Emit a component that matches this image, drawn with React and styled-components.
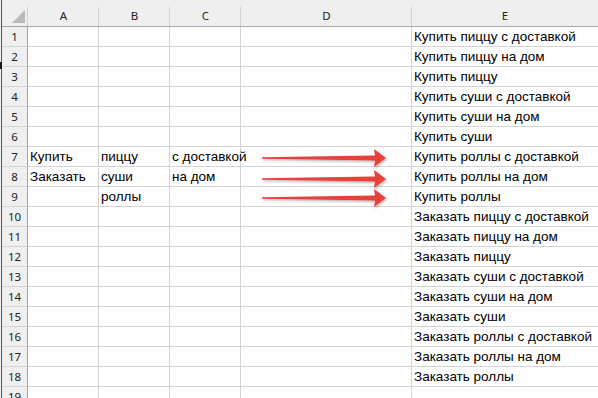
import React from 'react';
import styled, { createGlobalStyle } from 'styled-components';

const GlobalStyle = createGlobalStyle`
  html, body {
    margin: 0;
    padding: 0;
    background: #ffffff;
    overflow: hidden;
  }
`;

const Page = styled.div`
  position: relative;
  width: 598px;
  height: 398px;
  overflow: hidden;
  padding-left: 1px;
  box-sizing: border-box;
  background: #f0f0f0;
`;

const SplitHandle = styled.div`
  position: absolute;
  left: 0;
  top: 62px;
  width: 2px;
  height: 7px;
  background: #1b1b1b;
`;

const Sheet = styled.div`
  display: grid;
  grid-template-columns: 26px 71px 71px 71px 171px 1fr;
  grid-template-rows: 27px repeat(19, 20px);
  border-left: 1px solid #217346;
  background: #ffffff;
  height: 100%;
`;

const Corner = styled.div`
  position: relative;
  background:
    linear-gradient(#d2d2d2, #d2d2d2) right bottom / 1px 19px no-repeat,
    #efefef;
  border-bottom: 1px solid #a6a6a6;

  &::before {
    content: '';
    position: absolute;
    left: 10px;
    top: 10px;
    width: 0;
    height: 0;
    border-left: 13px solid transparent;
    border-bottom: 13px solid #b9b9b9;
  }
`;

const ColHeader = styled.div`
  background:
    linear-gradient(#d2d2d2, #d2d2d2) right bottom / 1px 19px no-repeat,
    #efefef;
  border-bottom: 1px solid #a6a6a6;
  font-family: 'Noto Sans', 'Open Sans', sans-serif;
  font-size: 11.5px;
  color: #222;
  display: flex;
  align-items: flex-end;
  justify-content: center;
  padding-bottom: 3px;
  box-sizing: border-box;
  ${({ $last }) => $last && 'background: #efefef;'}
`;

const RowHeader = styled.div`
  background: #efefef;
  border-right: 1px solid #a6a6a6;
  border-bottom: 1px solid #d4d4d4;
  font-family: 'Noto Sans', 'Open Sans', sans-serif;
  font-size: 11.5px;
  color: #222;
  display: flex;
  align-items: center;
  justify-content: center;
  box-sizing: border-box;
`;

const Cell = styled.div`
  border-bottom: 1px solid #d4d4d4;
  border-right: ${({ $last }) => ($last ? 'none' : '1px solid #d4d4d4')};
  font-family: 'Liberation Sans', Arial, sans-serif;
  font-size: 13.5px;
  color: #000;
  white-space: nowrap;
  padding: 0 0 2px 2px;
  display: flex;
  align-items: flex-end;
  box-sizing: border-box;
`;

const Arrows = styled.svg`
  position: absolute;
  left: 0;
  top: 0;
  pointer-events: none;
`;

const columns = ['A', 'B', 'C', 'D', 'E'];

// every verb × food × delivery combination, in sheet order
const combos = [];
['Купить', 'Заказать'].forEach((verb) =>
  ['пиццу', 'суши', 'роллы'].forEach((food) =>
    ['с доставкой', 'на дом', ''].forEach((how) =>
      combos.push([verb, food, how].filter(Boolean).join(' '))
    )
  )
);

const sources = {
  7: ['Купить', 'пиццу', 'с доставкой'],
  8: ['Заказать', 'суши', 'на дом'],
  9: ['', 'роллы', ''],
};

const rows = Array.from({ length: 19 }, (_, i) => {
  const n = i + 1;
  const [a = '', b = '', c = ''] = sources[n] || [];
  return { n, cells: [a, b, c, '', combos[i] || ''] };
});

const arrowYs = [158, 179, 198];

const arrowPoints = (cy) =>
  [
    [262, cy - 0.8],
    [375, cy - 2.6],
    [374, cy - 9],
    [386, cy],
    [374, cy + 9],
    [375, cy + 2.6],
    [262, cy + 0.8],
  ]
    .map((p) => p.join(','))
    .join(' ');

export default function App() {
  return (
    <>
      <GlobalStyle />
      <Page>
        <Sheet>
          <Corner />
          {columns.map((c, i) => (
            <ColHeader key={c} $last={i === columns.length - 1}>
              {c}
            </ColHeader>
          ))}
          {rows.map((row) => (
            <React.Fragment key={row.n}>
              <RowHeader>{row.n}</RowHeader>
              {row.cells.map((text, i) => (
                <Cell key={i} $last={i === row.cells.length - 1}>
                  {text}
                </Cell>
              ))}
            </React.Fragment>
          ))}
        </Sheet>
        <SplitHandle />
        <Arrows width="598" height="398" viewBox="0 0 598 398">
          <defs>
            <filter id="arrowShadow" x="-10%" y="-50%" width="120%" height="200%">
              <feDropShadow dx="1" dy="1.5" stdDeviation="0.8" floodColor="#000" floodOpacity="0.3" />
            </filter>
          </defs>
          {arrowYs.map((y) => (
            <polygon key={y} points={arrowPoints(y)} fill="#e8413a" filter="url(#arrowShadow)" />
          ))}
        </Arrows>
      </Page>
    </>
  );
}
